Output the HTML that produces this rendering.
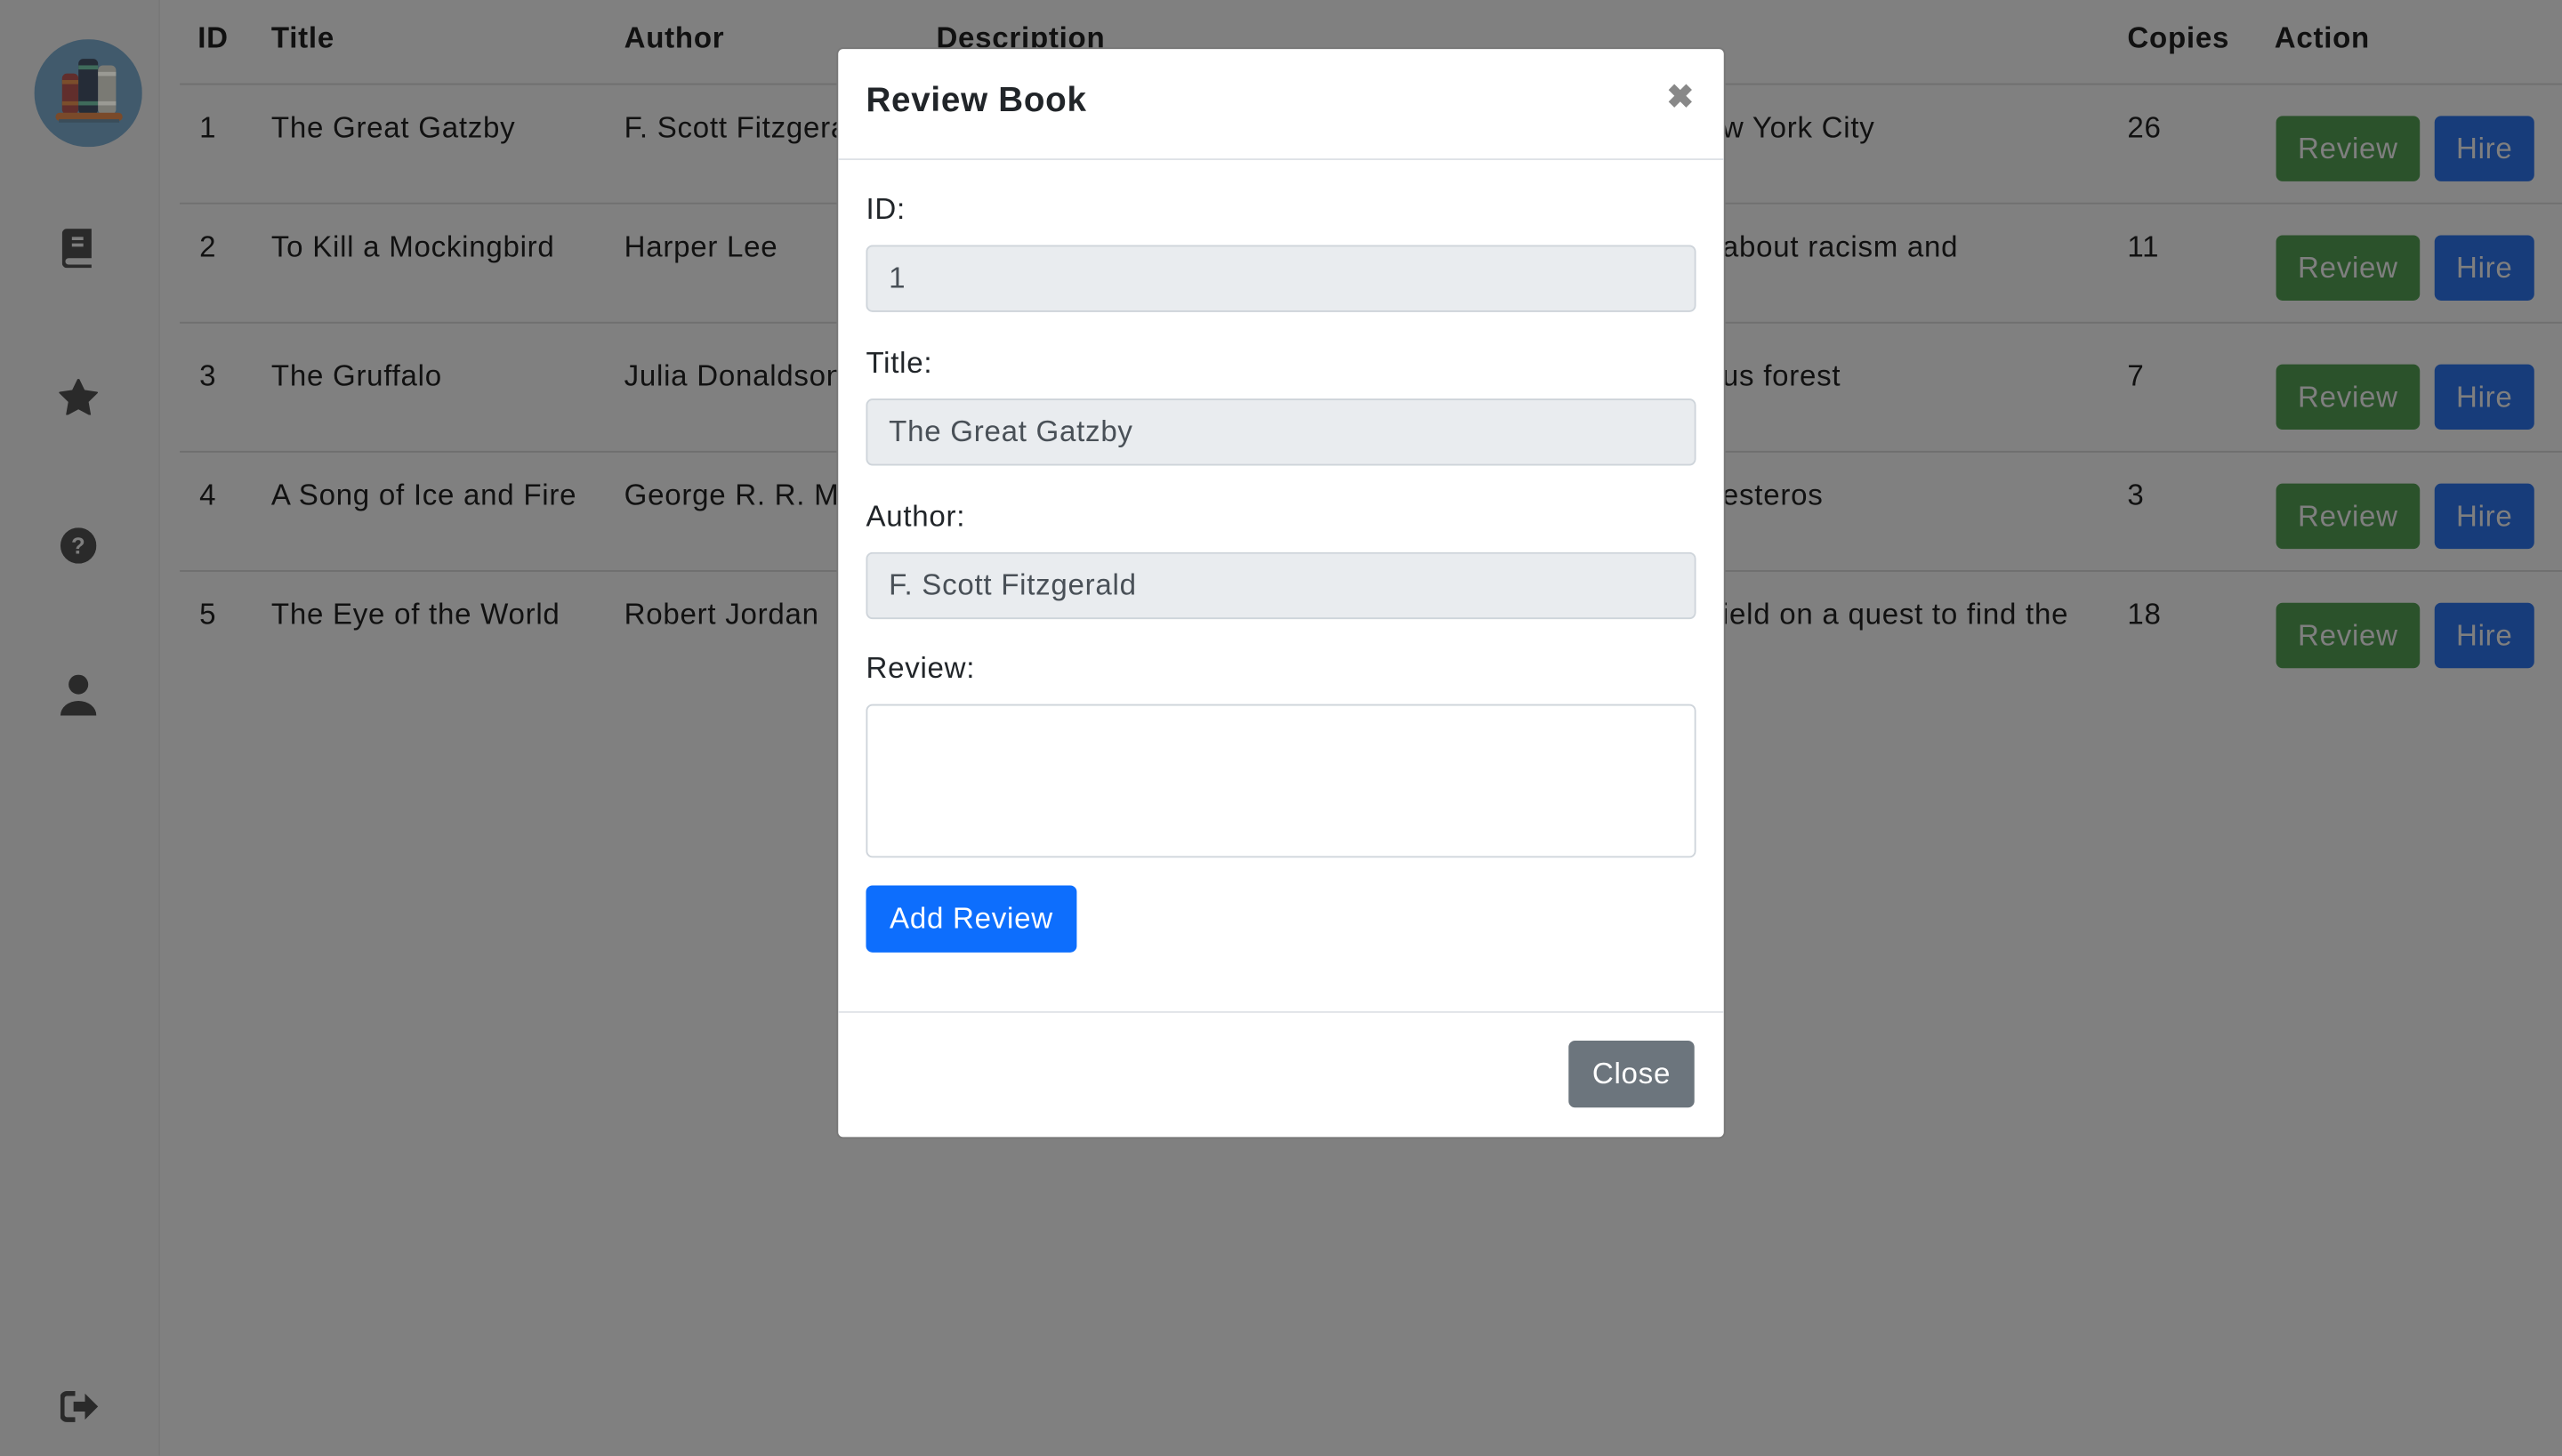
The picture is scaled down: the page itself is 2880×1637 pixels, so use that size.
<!DOCTYPE html>
<html><head><meta charset="utf-8">
<style>
html,body{margin:0;padding:0;width:2880px;height:1636px;overflow:hidden;background:#808080;}
#w{position:absolute;left:0;top:0;width:1568px;height:891px;transform:scale(1.836735);transform-origin:0 0;font-family:"Liberation Sans",sans-serif;color:#111;background:#808080;letter-spacing:0.4px;}
.side{position:absolute;left:0;top:0;width:97px;height:891px;background:#7e7e7e;border-right:1px solid #787878;}
.ic{position:absolute;left:36px;}
.th{position:absolute;top:13px;font-weight:bold;font-size:18px;color:#111;}
.row{position:absolute;left:110px;right:0;height:73px;border-top:1px solid #6f6f6f;}
.c{position:absolute;font-size:18px;color:#111;}
.b{position:absolute;height:40px;border-radius:4px;color:#7f7f7f;font-size:18px;line-height:40px;text-align:center;}
.g{background:#2b522b;width:88px;left:1283px;}
.h{background:#173c7a;width:61px;left:1380px;}
.modal{position:absolute;left:512px;top:29px;width:542px;height:666px;background:#fff;border-radius:4px;border:1px solid #777;}
.lbl{position:absolute;left:17px;font-size:18px;color:#212529;}
.inp{position:absolute;left:17px;width:508px;height:41px;background:#e9ecef;border:1px solid #ced4da;border-radius:4px;box-sizing:border-box;font-size:18px;color:#495057;padding:0 13px;line-height:39px;}
</style></head><body><div id="w">
<div class="side">
 <svg style="position:absolute;left:21px;top:24px" width="66" height="66" viewBox="0 0 66 66">
  <circle cx="33" cy="33" r="33" fill="#415a6c"/>
  <rect x="17" y="21" width="10" height="25" rx="3" fill="#612e2c"/>
  <rect x="17" y="25" width="10" height="2.5" fill="#7b4e2c"/>
  <rect x="17" y="38" width="10" height="2.5" fill="#7b4e2c"/>
  <rect x="27" y="12" width="12" height="34" rx="3" fill="#252c37"/>
  <rect x="27" y="16" width="12" height="2.5" fill="#3f6b5b"/>
  <rect x="27" y="38" width="12" height="2.5" fill="#3f6b5b"/>
  <rect x="39" y="16" width="11" height="30" rx="3" fill="#7a7a74"/>
  <rect x="39" y="20" width="11" height="2.5" fill="#9a9a94"/>
  <rect x="39" y="38" width="11" height="2.5" fill="#9a9a94"/>
  <rect x="13" y="45" width="41" height="5" rx="2.5" fill="#7a4a2a"/>
  <rect x="15" y="49" width="37" height="2" fill="#3a4d5a"/>
 </svg>
 <svg class="ic" style="top:140px;left:38px" width="20" height="24" viewBox="0 0 20 24"><path d="M3 0h15v18H4a2 2 0 0 0 0 4h14v2H3a3 3 0 0 1-3-3V3a3 3 0 0 1 3-3z" fill="#2a2a2a"/><rect x="6" y="5" width="7" height="2" fill="#7e7e7e"/><rect x="6" y="9" width="7" height="2" fill="#7e7e7e"/></svg>
 <svg class="ic" style="top:232px" width="24" height="22" viewBox="0 0 24 22"><path d="M12 0l3.5 7.2 7.9 1.1-5.7 5.6 1.4 7.9L12 18l-7.1 3.8 1.4-7.9L.6 8.3l7.9-1.1z" fill="#2a2a2a" stroke="#2a2a2a" stroke-linejoin="round"/></svg>
 <svg class="ic" style="top:323px;left:37px" width="22" height="22" viewBox="0 0 22 22"><circle cx="11" cy="11" r="11" fill="#2a2a2a"/><text x="11" y="16" text-anchor="middle" font-size="14" font-weight="bold" font-family="Liberation Sans" fill="#7e7e7e">?</text></svg>
 <svg class="ic" style="top:413px;left:37px" width="22" height="26" viewBox="0 0 22 26"><circle cx="11" cy="6" r="6" fill="#2a2a2a"/><path d="M0 25a11 9 0 0 1 22 0z" fill="#2a2a2a"/></svg>
 <svg class="ic" style="top:851px;left:37px" width="24" height="20" viewBox="0 0 24 20"><path d="M9 2H4a3 3 0 0 0-3 3v10a3 3 0 0 0 3 3h5" stroke="#2a2a2a" stroke-width="3" fill="none"/><path d="M8 7h7V2l8 8-8 8v-5H8z" fill="#2a2a2a"/></svg>
</div>
<div class="th" style="left:121px">ID</div>
<div class="th" style="left:166px">Title</div>
<div class="th" style="left:382px">Author</div>
<div class="th" style="left:573px">Description</div>
<div class="th" style="left:1302px">Copies</div>
<div class="th" style="left:1392px">Action</div>

<div class="row" style="top:51px"><div class="c" style="left:12px;top:16px">1</div><div class="c" style="left:56px;top:16px">The Great Gatzby</div><div class="c" style="left:272px;top:16px">F. Scott Fitzgerald</div><div class="c" style="left:944px;top:16px">w York City</div><div class="c" style="left:1192px;top:16px">26</div><div class="b g" style="top:19px">Review</div><div class="b h" style="top:19px">Hire</div></div>
<div class="row" style="top:124px"><div class="c" style="left:12px;top:16px">2</div><div class="c" style="left:56px;top:16px">To Kill a Mockingbird</div><div class="c" style="left:272px;top:16px">Harper Lee</div><div class="c" style="left:944px;top:16px">about racism and</div><div class="c" style="left:1192px;top:16px">11</div><div class="b g" style="top:19px">Review</div><div class="b h" style="top:19px">Hire</div></div>
<div class="row" style="top:197px;height:79px"><div class="c" style="left:12px;top:22px">3</div><div class="c" style="left:56px;top:22px">The Gruffalo</div><div class="c" style="left:272px;top:22px">Julia Donaldson</div><div class="c" style="left:944px;top:22px">us forest</div><div class="c" style="left:1192px;top:22px">7</div><div class="b g" style="top:25px">Review</div><div class="b h" style="top:25px">Hire</div></div>
<div class="row" style="top:276px"><div class="c" style="left:12px;top:16px">4</div><div class="c" style="left:56px;top:16px">A Song of Ice and Fire</div><div class="c" style="left:272px;top:16px">George R. R. Martin</div><div class="c" style="left:944px;top:16px">esteros</div><div class="c" style="left:1192px;top:16px">3</div><div class="b g" style="top:19px">Review</div><div class="b h" style="top:19px">Hire</div></div>
<div class="row" style="top:349px;border-bottom:none"><div class="c" style="left:12px;top:16px">5</div><div class="c" style="left:56px;top:16px">The Eye of the World</div><div class="c" style="left:272px;top:16px">Robert Jordan</div><div class="c" style="left:944px;top:16px">ield on a quest to find the</div><div class="c" style="left:1192px;top:16px">18</div><div class="b g" style="top:19px">Review</div><div class="b h" style="top:19px">Hire</div></div>

<div class="modal">
 <div style="position:absolute;left:17px;top:20px;font-size:21px;font-weight:bold;color:#212529">Review Book</div>
 <div style="position:absolute;left:507px;top:17px;font-size:20px;color:#888;font-weight:bold">✖</div>
 <div style="position:absolute;left:0;right:0;top:67px;border-top:1px solid #dee2e6"></div>
 <div class="lbl" style="top:88px">ID:</div>
 <div class="inp" style="top:120px">1</div>
 <div class="lbl" style="top:182px">Title:</div>
 <div class="inp" style="top:214px">The Great Gatzby</div>
 <div class="lbl" style="top:276px">Author:</div>
 <div class="inp" style="top:308px">F. Scott Fitzgerald</div>
 <div class="lbl" style="top:369px">Review:</div>
 <div class="inp" style="top:401px;height:94px;background:#fff"></div>
 <div style="position:absolute;left:17px;top:512px;width:129px;height:41px;background:#0d6efd;border-radius:4px;color:#fff;font-size:18px;line-height:41px;text-align:center">Add Review</div>
 <div style="position:absolute;left:0;right:0;top:589px;border-top:1px solid #dee2e6"></div>
 <div style="position:absolute;left:447px;top:607px;width:77px;height:41px;background:#6c757d;border-radius:4px;color:#fff;font-size:18px;line-height:41px;text-align:center">Close</div>
</div>
</div></body></html>
